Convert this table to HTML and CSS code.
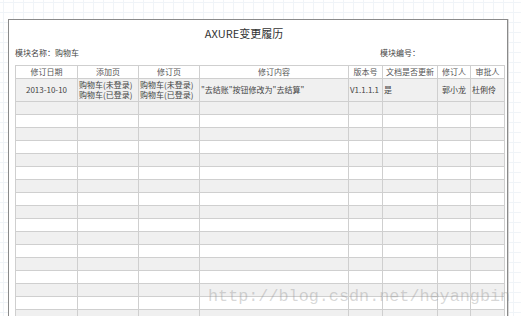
FILE: index.html
```html
<!DOCTYPE html>
<html lang="zh">
<head>
<meta charset="utf-8">
<title>AXURE变更履历</title>
<link rel="stylesheet" href="styles.css">
</head>
<body>
<div class="canvas">
  <div class="panel">
    <h1 class="title">AXURE变更履历</h1>
    <div class="info">
      <span>模块名称：购物车</span>
      <span>模块编号：</span>
    </div>
    <table class="log">
      <colgroup>
        <col class="c-date"><col class="c-add"><col class="c-mod"><col class="c-content"><col class="c-ver"><col class="c-doc"><col class="c-rev"><col class="c-app">
      </colgroup>
      <thead>
        <tr><th>修订日期</th><th>添加页</th><th>修订页</th><th>修订内容</th><th>版本号</th><th>文档是否更新</th><th>修订人</th><th>审批人</th></tr>
      </thead>
      <tbody>
        <tr class="data">
          <td class="center">2013-10-10</td>
          <td>购物车(未登录)<br>购物车(已登录)</td>
          <td>购物车(未登录)<br>购物车(已登录)</td>
          <td>"去结账"按钮修改为"去结算"</td>
          <td>V1.1.1.1</td>
          <td>是</td>
          <td class="pl">郭小龙</td>
          <td>杜俐伶</td>
        </tr>
        <tr><td></td><td></td><td></td><td></td><td></td><td></td><td></td><td></td></tr>
        <tr><td></td><td></td><td></td><td></td><td></td><td></td><td></td><td></td></tr>
        <tr><td></td><td></td><td></td><td></td><td></td><td></td><td></td><td></td></tr>
        <tr><td></td><td></td><td></td><td></td><td></td><td></td><td></td><td></td></tr>
        <tr><td></td><td></td><td></td><td></td><td></td><td></td><td></td><td></td></tr>
        <tr><td></td><td></td><td></td><td></td><td></td><td></td><td></td><td></td></tr>
        <tr><td></td><td></td><td></td><td></td><td></td><td></td><td></td><td></td></tr>
        <tr><td></td><td></td><td></td><td></td><td></td><td></td><td></td><td></td></tr>
        <tr><td></td><td></td><td></td><td></td><td></td><td></td><td></td><td></td></tr>
        <tr><td></td><td></td><td></td><td></td><td></td><td></td><td></td><td></td></tr>
        <tr><td></td><td></td><td></td><td></td><td></td><td></td><td></td><td></td></tr>
        <tr><td></td><td></td><td></td><td></td><td></td><td></td><td></td><td></td></tr>
        <tr><td></td><td></td><td></td><td></td><td></td><td></td><td></td><td></td></tr>
        <tr><td></td><td></td><td></td><td></td><td></td><td></td><td></td><td></td></tr>
        <tr><td></td><td></td><td></td><td></td><td></td><td></td><td></td><td></td></tr>
        <tr><td></td><td></td><td></td><td></td><td></td><td></td><td></td><td></td></tr>
        <tr><td></td><td></td><td></td><td></td><td></td><td></td><td></td><td></td></tr>
      </tbody>
    </table>
  </div>
  <div class="watermark">http://blog.csdn.net/heyangbin</div>
</div>
</body>
</html>
```
FILE: styles.css
```css
html, body {
  margin: 0;
  padding: 0;
  height: 100%;
  overflow: hidden;
}
body {
  background-color: #fff;
  background-image:
    linear-gradient(to right, #f0f4f8 1px, transparent 1px),
    linear-gradient(to bottom, #f0f4f8 1px, transparent 1px);
  background-size: 10px 10px;
  background-position: 3px 2px;
  font-family: "Noto Sans CJK SC", "Noto Sans", sans-serif;
  color: #444;
}
.canvas {
  position: relative;
  display: flow-root;
  height: 316px;
}
.panel {
  margin: 19px 0 0 8px;
  width: 500px;
  height: 400px;
  border: 1px solid #8a8a8a;
  background: #fff;
  box-shadow: 1px 0 0 #d8d8d8;
  padding: 6px 0 0 6px;
  box-sizing: border-box;
}
.title {
  margin: 0;
  font-size: 11px;
  line-height: 14px;
  font-weight: normal;
  color: #333;
  text-align: center;
  padding-right: 34px;
}
.info {
  display: grid;
  grid-template-columns: 365px auto;
  font-size: 8px;
  line-height: 12px;
  color: #444;
  margin-top: 7px;
  margin-bottom: 6px;
}
.log {
  border-collapse: collapse;
  table-layout: fixed;
  width: 489px;
  font-size: 8px;
  color: #555;
}
.c-date { width: 62px; }
.c-add { width: 61px; }
.c-mod { width: 61px; }
.c-content { width: 149px; }
.c-ver { width: 34px; }
.c-doc { width: 55px; }
.c-rev { width: 33px; }
.c-app { width: 34px; }
.log th, .log td {
  border: 1px solid #cfcfcf;
  padding: 0 1px;
  height: 12px;
  line-height: 10px;
  white-space: nowrap;
  overflow: hidden;
  font-weight: normal;
  text-align: left;
}
.log th {
  text-align: center;
  color: #555;
  background: #fff;
}
.log tbody tr:nth-child(odd) { background: #fff; }
.log tbody tr:nth-child(even) { background: #f0f0f0; }
.log tbody tr.data { background: #f0f0f0; }
.log tr.data td {
  height: 22px;
  color: #444;
}
.log td.center { text-align: center; }
.log td.pl { padding-left: 4px; }
.watermark {
  position: absolute;
  left: 208px;
  top: 287px;
  font-family: "Liberation Mono", "DejaVu Sans Mono", monospace;
  font-size: 16.8px;
  line-height: 20px;
  color: rgba(140, 140, 140, 0.35);
  white-space: nowrap;
}
```
